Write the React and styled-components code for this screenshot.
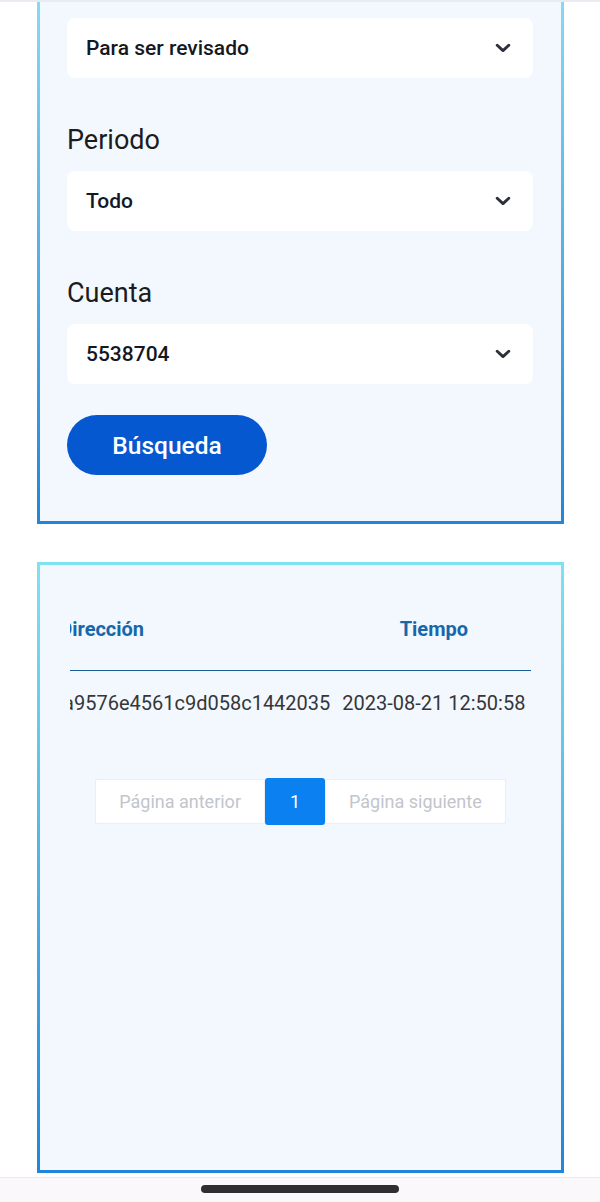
import React, { useLayoutEffect, useRef } from "react";
import styled, { createGlobalStyle } from "styled-components";

const GlobalStyle = createGlobalStyle`
  * { box-sizing: border-box; }
  html, body { margin: 0; padding: 0; background: #ffffff; }
  body { font-family: Roboto, "Noto Sans", "Liberation Sans", sans-serif; color: #1b1b1f; }
`;

const Page = styled.div`
  width: 600px;
  height: 1202px;
  display: flex;
  flex-direction: column;
  overflow: hidden;
`;

const TopEdge = styled.div`
  height: 2px;
  background: #e8ebf0;
  flex-shrink: 0;
`;

const Panel = styled.section`
  margin: 0 36px 0 37px;
  border: 3px solid transparent;
  border-top-width: ${(p) => (p.$cut ? "0" : "3px")};
  background:
    linear-gradient(#f3f8fe, #f3f8fe) padding-box,
    linear-gradient(to bottom, ${(p) => (p.$cut ? "#86d9f2" : "#7fe2ef")}, #1f86db) border-box;
  flex-shrink: 0;
`;

const FilterPanel = styled(Panel)`
  padding: 16px 28px 46px 27px;
  display: flex;
  flex-direction: column;
`;

const ResultsPanel = styled(Panel)`
  margin-top: 38px;
  height: 611px;
  padding: 23px 30px 0 30px;
`;

const FieldLabel = styled.div`
  font-size: 27px;
  line-height: 36px;
  font-weight: 400;
  color: #1c1c20;
  margin-bottom: 13px;
`;

const SelectBox = styled.div`
  height: 60px;
  background: #ffffff;
  border-radius: 8px;
  display: flex;
  align-items: center;
  justify-content: space-between;
  padding: 0 22px 0 19px;
  margin-bottom: ${(p) => (p.$last ? "31px" : "44px")};
`;

const SelectValue = styled.span`
  font-size: 21px;
  font-weight: 500;
  color: #141823;
`;

const Chevron = () => (
  <svg width="16" height="10" viewBox="0 0 16 10" aria-hidden="true">
    <path d="M2.2 2.2 L8 7.6 L13.8 2.2" fill="none" stroke="#2c303b" strokeWidth="2.9" strokeLinecap="round" strokeLinejoin="round" />
  </svg>
);

const SearchButton = styled.button`
  width: 200px;
  height: 60px;
  border: none;
  border-radius: 30px;
  background: #0558cf;
  color: #ffffff;
  font-family: inherit;
  font-size: 24.5px;
  font-weight: 500;
  padding: 0;
  cursor: pointer;
`;

const TableScroll = styled.div`
  overflow-x: auto;
  scrollbar-width: none;
  &::-webkit-scrollbar { display: none; }
`;

const Table = styled.table`
  border-collapse: collapse;
  white-space: nowrap;
`;

const HeadCell = styled.th`
  height: 82px;
  padding: 0 6px;
  text-align: center;
  vertical-align: middle;
  font-size: 20px;
  font-weight: 700;
  color: #1767ab;
  border-bottom: 1px solid #1b5d98;
`;

const Cell = styled.td`
  height: 66px;
  padding: 0 6px;
  text-align: center;
  vertical-align: middle;
  font-size: 20px;
  font-weight: 400;
  color: #363638;
`;

const Pager = styled.div`
  display: flex;
  justify-content: center;
  align-items: stretch;
  margin-top: 43px;
  height: 45px;
`;

const PagerButton = styled.button`
  border: 1px solid #eceef2;
  background: #ffffff;
  color: #c2c5cc;
  font-family: inherit;
  font-size: 18px;
  padding: 0 23px;
  border-radius: ${(p) => (p.$side === "left" ? "2px 0 0 2px" : "0 2px 2px 0")};
`;

const PageNumber = styled.button`
  width: 60px;
  border: none;
  background: #0a80f1;
  color: #ffffff;
  font-family: inherit;
  font-size: 18px;
  border-radius: 3px;
  margin: -1px 0;
`;

const NavBar = styled.div`
  margin-top: 4px;
  height: 25px;
  background: #faf8fb;
  border-top: 1px solid #ebeaee;
  display: flex;
  justify-content: center;
  padding-top: 7px;
  flex-shrink: 0;
`;

const HomeIndicator = styled.div`
  width: 198px;
  height: 8px;
  border-radius: 4px;
  background: #2f2f31;
`;

const fields = [
  { label: null, value: "Para ser revisado" },
  { label: "Periodo", value: "Todo" },
  { label: "Cuenta", value: "5538704", last: true },
];

const rows = [
  { address: "0x7c3e1f8b24d6e0faa9576e4561c9d058c1442035", time: "2023-08-21 12:50:58" },
];

export default function App() {
  const scrollRef = useRef(null);
  useLayoutEffect(() => {
    const el = scrollRef.current;
    if (el) el.scrollLeft = el.scrollWidth;
  }, []);

  return (
    <>
      <GlobalStyle />
      <Page>
        <TopEdge />
        <FilterPanel $cut>
          {fields.map((f) => (
            <React.Fragment key={f.value}>
              {f.label && <FieldLabel>{f.label}</FieldLabel>}
              <SelectBox $last={f.last}>
                <SelectValue>{f.value}</SelectValue>
                <Chevron />
              </SelectBox>
            </React.Fragment>
          ))}
          <SearchButton>Búsqueda</SearchButton>
        </FilterPanel>

        <ResultsPanel>
          <TableScroll ref={scrollRef}>
            <Table>
              <thead>
                <tr>
                  <HeadCell>Dirección</HeadCell>
                  <HeadCell>Tiempo</HeadCell>
                </tr>
              </thead>
              <tbody>
                {rows.map((r) => (
                  <tr key={r.address}>
                    <Cell>{r.address}</Cell>
                    <Cell>{r.time}</Cell>
                  </tr>
                ))}
              </tbody>
            </Table>
          </TableScroll>
          <Pager>
            <PagerButton $side="left">Página anterior</PagerButton>
            <PageNumber>1</PageNumber>
            <PagerButton $side="right">Página siguiente</PagerButton>
          </Pager>
        </ResultsPanel>

        <NavBar>
          <HomeIndicator />
        </NavBar>
      </Page>
    </>
  );
}
